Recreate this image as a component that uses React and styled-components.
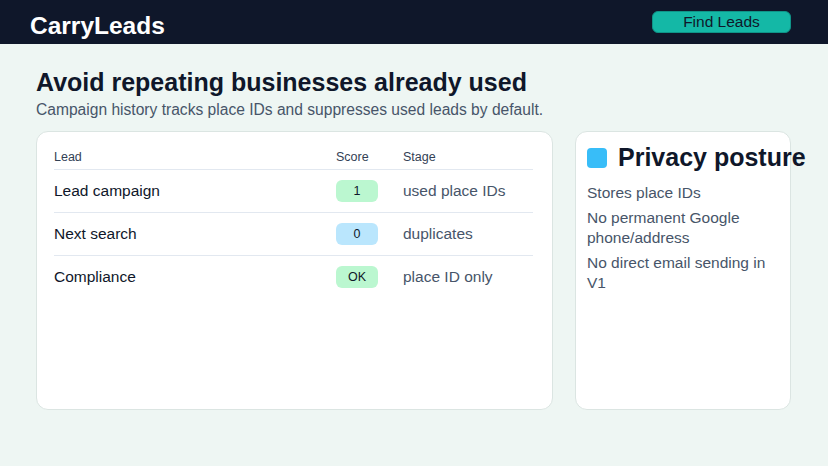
import styled, { createGlobalStyle } from "styled-components";

const Global = createGlobalStyle`
  body { margin: 0; background: #eef6f3; font-family: "Liberation Sans", Arial, sans-serif; }
`;

const Header = styled.header`
  height: 44px;
  background: #0f172a;
  display: flex;
  align-items: center;
  justify-content: space-between;
  padding: 0 37px 0 30px;
`;

const Logo = styled.div`
  color: #fff;
  font-size: 24.5px;
  font-weight: 700;
  margin-top: 8px;
`;

const FindButton = styled.button`
  width: 139px;
  height: 22px;
  border: 1px solid #0f9488;
  border-radius: 6px;
  background: #14b8a6;
  color: #0f172a;
  font-family: inherit;
  font-size: 15.5px;
  padding: 0;
  margin-top: -1px;
`;

const Main = styled.main`
  padding: 23px 37px 0 36px;
`;

const Title = styled.h1`
  margin: 0;
  font-size: 25px;
  font-weight: 700;
  color: #0f172a;
  line-height: 30px;
`;

const Subtitle = styled.p`
  margin: 4px 0 0;
  font-size: 15.6px;
  color: #475569;
`;

const Columns = styled.div`
  display: grid;
  grid-template-columns: 517px 216px;
  gap: 22px;
  margin-top: 12px;
`;

const Card = styled.section`
  background: #fff;
  border: 1px solid #dbe5e2;
  border-radius: 12px;
  height: 279px;
  box-sizing: border-box;
  padding: ${(p) => p.$pad};
  min-width: 0;
`;

const Table = styled.table`
  width: 100%;
  border-collapse: collapse;
`;

const Th = styled.th`
  text-align: left;
  font-weight: 400;
  font-size: 12.5px;
  color: #334155;
  padding: 0 0 5px;
  border-bottom: 1px solid #e2e8f0;
  width: ${(p) => p.$w || "auto"};
`;

const Td = styled.td`
  font-size: 15.5px;
  color: ${(p) => (p.$muted ? "#475569" : "#0f172a")};
  height: 42px;
  border-bottom: ${(p) => (p.$last ? "none" : "1px solid #e2e8f0")};
  padding: 0;
`;

const Pill = styled.span`
  display: inline-block;
  width: 42px;
  height: 22px;
  line-height: 22px;
  text-align: center;
  border-radius: 6px;
  font-size: 12.5px;
  color: #0f172a;
  background: ${(p) => p.$bg};
`;

const CardTitle = styled.h2`
  margin: 0 0 11px;
  display: flex;
  align-items: center;
  gap: 11px;
  font-size: 25px;
  font-weight: 700;
  color: #0f172a;
  white-space: nowrap;
`;

const Square = styled.span`
  width: 20px;
  height: 20px;
  border-radius: 4px;
  background: #38bdf8;
  flex: none;
`;

const Item = styled.p`
  margin: 0 0 5px;
  font-size: 15.5px;
  line-height: 20px;
  color: #475569;
`;

const rows = [
  ["Lead campaign", "1", "#bbf7d0", "used place IDs"],
  ["Next search", "0", "#bae6fd", "duplicates"],
  ["Compliance", "OK", "#bbf7d0", "place ID only"],
];

export default function App() {
  return (
    <>
      <Global />
      <Header>
        <Logo>CarryLeads</Logo>
        <FindButton>Find Leads</FindButton>
      </Header>
      <Main>
        <Title>Avoid repeating businesses already used</Title>
        <Subtitle>Campaign history tracks place IDs and suppresses used leads by default.</Subtitle>
        <Columns>
          <Card $pad="18px 19px 0 17px">
            <Table>
              <thead>
                <tr>
                  <Th $w="282px">Lead</Th>
                  <Th $w="67px">Score</Th>
                  <Th>Stage</Th>
                </tr>
              </thead>
              <tbody>
                {rows.map(([lead, score, bg, stage], i) => (
                  <tr key={lead}>
                    <Td $last={i === rows.length - 1}>{lead}</Td>
                    <Td $last={i === rows.length - 1}><Pill $bg={bg}>{score}</Pill></Td>
                    <Td $muted $last={i === rows.length - 1}>{stage}</Td>
                  </tr>
                ))}
              </tbody>
            </Table>
          </Card>
          <Card $pad="11px 11px 0 11px">
            <CardTitle><Square />Privacy posture</CardTitle>
            <Item>Stores place IDs</Item>
            <Item>No permanent Google phone/address</Item>
            <Item>No direct email sending in V1</Item>
          </Card>
        </Columns>
      </Main>
    </>
  );
}
